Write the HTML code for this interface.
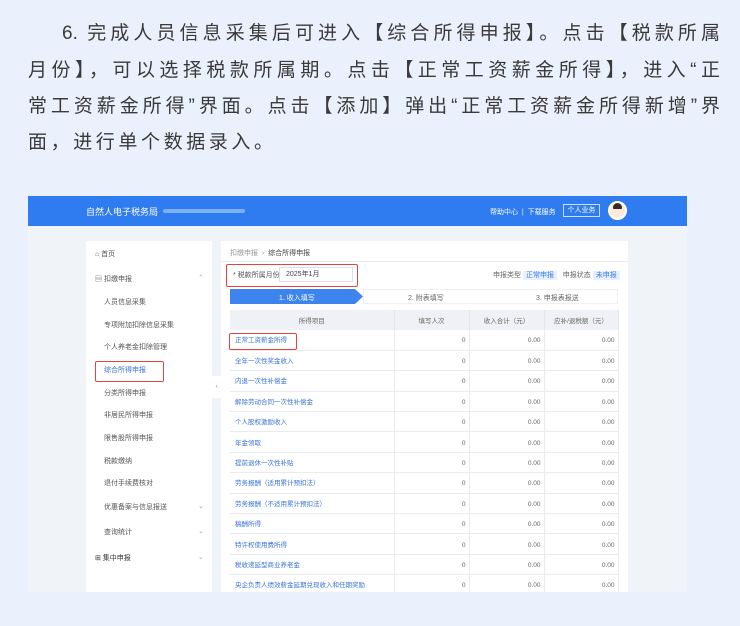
<!DOCTYPE html>
<html><head><meta charset="utf-8"><style>
*{margin:0;padding:0;box-sizing:border-box}
body{width:740px;height:626px;background:#eaf1fc;font-family:"Liberation Sans","Noto Sans CJK SC",sans-serif;position:relative;overflow:hidden}
.ln{position:absolute;font-size:19px;line-height:36px;color:#3a3a3a;white-space:nowrap;text-align:justify;text-align-last:justify}
.shot{position:absolute;left:28px;top:196px;width:659px;height:396px;background:#f0f4f8;overflow:hidden}
.hdr{position:absolute;left:0;top:0;width:659px;height:30px;background:#2f7bf0}
.a{position:absolute;white-space:nowrap}
.side{position:absolute;left:58px;top:45px;width:126px;height:360px;background:#fff}
.side div{position:absolute;font-size:7px;color:#555;white-space:nowrap}
.main{position:absolute;left:193px;top:45px;width:407px;height:360px;background:#fff}
.f7{font-size:7px}
table{position:absolute;left:9px;top:69px;border-collapse:collapse;width:388px;table-layout:fixed}
td{height:20.4px;line-height:12px;vertical-align:middle;border-bottom:1px solid #e8ebef;border-right:1px solid #e8ebef;font-size:6.5px;color:#666;text-align:right;padding:3px 3px 0 0;white-space:nowrap;overflow:hidden}
td:first-child{text-align:left;color:#3a73d8;padding-left:5px}
th{height:20px;background:#eef1f5;font-size:6.5px;color:#666;font-weight:normal;border-right:1px solid #e3e6ea;vertical-align:middle}
.red{position:absolute;border:1.5px solid #e0463c;border-radius:2px}
</style></head><body>
<div class="ln" style="left:62px;top:16px;width:658px">6. 完成人员信息采集后可进入【综合所得申报】。点击【税款所属</div>
<div class="ln" style="left:28px;top:53px;width:692px">月份】，可以选择税款所属期。点击【正常工资薪金所得】，进入“正</div>
<div class="ln" style="left:28px;top:89px;width:692px">常工资薪金所得”界面。点击【添加】弹出“正常工资薪金所得新增”界</div>
<div class="ln" style="left:28px;top:125px;letter-spacing:3.6px;text-align-last:auto">面，进行单个数据录入。</div>
<div class="shot">
 <div class="hdr">
  <div class="a" style="left:58px;top:9px;font-size:9px;color:#fff">自然人电子税务局</div>
  <div class="a" style="left:135px;top:13px;width:82px;height:4px;background:#7fb0f6;border-radius:2px"></div>
  <div class="a f7" style="left:462px;top:11px;color:#fff">帮助中心 &nbsp;|&nbsp; 下载服务</div>
  <div class="a f7" style="left:535px;top:8px;width:37px;height:13px;border:1px solid #cfe0fb;color:#fff;text-align:center;line-height:11px">个人业务</div>
  <div class="a" style="left:580px;top:5px;width:19px;height:19px;border-radius:50%;background:#fde9dd;border:2px solid #fff"></div>
  <div class="a" style="left:585px;top:7px;width:9px;height:6px;border-radius:5px 5px 1px 1px;background:#3b2a22"></div>
 </div>
 <div class="side">
  <div style="left:9px;top:8px">⌂ 首页</div>
  <div style="left:9px;top:33px">▤ 扣缴申报</div>
  <div style="left:112px;top:33px;color:#aaa">⌃</div>
  <div style="left:18px;top:56px">人员信息采集</div>
  <div style="left:18px;top:79px">专项附加扣除信息采集</div>
  <div style="left:18px;top:101px">个人养老金扣除管理</div>
  <div style="left:18px;top:124px;color:#3a73d8">综合所得申报</div>
  <div style="left:18px;top:147px">分类所得申报</div>
  <div style="left:18px;top:169px">非居民所得申报</div>
  <div style="left:18px;top:192px">限售股所得申报</div>
  <div style="left:18px;top:215px">税款缴纳</div>
  <div style="left:18px;top:237px">退付手续费核对</div>
  <div style="left:18px;top:261px">优惠备案与信息报送</div>
  <div style="left:112px;top:261px;color:#aaa">⌄</div>
  <div style="left:18px;top:286px">查询统计</div>
  <div style="left:112px;top:286px;color:#aaa">⌄</div>
  <div style="left:9px;top:312px;color:#333">⊞ 集中申报</div>
  <div style="left:112px;top:312px;color:#aaa">⌄</div>
 </div>
 <div class="red" style="left:67px;top:165px;width:69px;height:21px"></div>
 <div class="main">
  <div class="a f7" style="left:9px;top:7px;color:#999">扣缴申报 &nbsp;› &nbsp;<span style="color:#444">综合所得申报</span></div>
  <div class="a" style="left:0;top:20px;width:407px;height:1px;background:#e8ebef"></div>
  <div class="a f7" style="left:12px;top:29px;color:#555">* 税款所属月份</div>
  <div class="a f7" style="left:58px;top:26px;width:74px;height:15px;border:1px solid #dde;color:#444;line-height:13px;padding-left:6px">2025年1月</div>
  <div class="a f7" style="left:272px;top:29px;color:#666">申报类型 <span style="background:#e6f0ff;color:#3a7bea;padding:1px 3px">正常申报</span> &nbsp;&nbsp;申报状态 <span style="background:#e6f0ff;color:#3a7bea;padding:1px 3px">未申报</span></div>
  <div class="a" style="left:9px;top:48px;width:133px;height:15px;background:#3d84ee;clip-path:polygon(0 0,94% 0,100% 50%,94% 100%,0 100%)"></div>
  <div class="a f7" style="left:58px;top:52px;color:#fff">1. 收入填写</div>
  <div class="a" style="left:142px;top:48px;width:255px;height:15px;border:1px solid #eceff3"></div>
  <div class="a f7" style="left:187px;top:52px;color:#666">2. 附表填写</div>
  <div class="a f7" style="left:315px;top:52px;color:#666">3. 申报表报送</div>
  <table>
   <colgroup><col style="width:164px"><col style="width:75px"><col style="width:75px"><col style="width:74px"></colgroup>
   <tr><th>所得项目</th><th>填写人次</th><th>收入合计（元）</th><th>应补/退税额（元）</th></tr>
   <tr><td>正常工资薪金所得</td><td>0</td><td>0.00</td><td>0.00</td></tr>
   <tr><td>全年一次性奖金收入</td><td>0</td><td>0.00</td><td>0.00</td></tr>
   <tr><td>内退一次性补偿金</td><td>0</td><td>0.00</td><td>0.00</td></tr>
   <tr><td>解除劳动合同一次性补偿金</td><td>0</td><td>0.00</td><td>0.00</td></tr>
   <tr><td>个人股权激励收入</td><td>0</td><td>0.00</td><td>0.00</td></tr>
   <tr><td>年金领取</td><td>0</td><td>0.00</td><td>0.00</td></tr>
   <tr><td>提前退休一次性补贴</td><td>0</td><td>0.00</td><td>0.00</td></tr>
   <tr><td>劳务报酬（适用累计预扣法）</td><td>0</td><td>0.00</td><td>0.00</td></tr>
   <tr><td>劳务报酬（不适用累计预扣法）</td><td>0</td><td>0.00</td><td>0.00</td></tr>
   <tr><td>稿酬所得</td><td>0</td><td>0.00</td><td>0.00</td></tr>
   <tr><td>特许权使用费所得</td><td>0</td><td>0.00</td><td>0.00</td></tr>
   <tr><td>税收递延型商业养老金</td><td>0</td><td>0.00</td><td>0.00</td></tr>
   <tr><td>央企负责人绩效薪金延期兑现收入和任期奖励</td><td>0</td><td>0.00</td><td>0.00</td></tr>
  </table>
 </div>
 <div class="red" style="left:198px;top:68px;width:132px;height:23px"></div>
 <div class="red" style="left:201px;top:137px;width:68px;height:17px"></div>
 <div class="a" style="left:184px;top:180px;width:9px;height:22px;background:#fff;font-size:6px;color:#888;text-align:center;line-height:22px">‹</div>
</div>
</body></html>
